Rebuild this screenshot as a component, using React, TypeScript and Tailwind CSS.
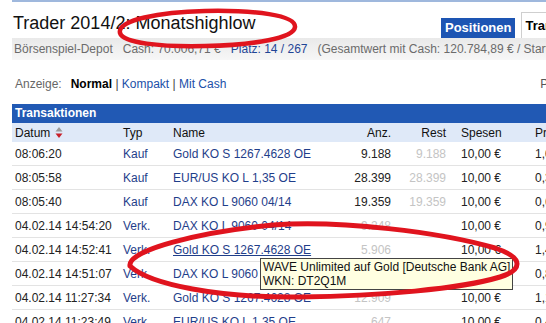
import React from 'react'

type Row = {
  datum: string
  typ: string
  name: string
  anz: string
  rest: string
  pr: string
  verk?: boolean
  hover?: boolean
}

const rows: Row[] = [
  { datum: '08:06:20', typ: 'Kauf', name: 'Gold KO S 1267.4628 OE', anz: '9.188', rest: '9.188', pr: '1,02 €' },
  { datum: '08:05:58', typ: 'Kauf', name: 'EUR/US KO L 1,35 OE', anz: '28.399', rest: '28.399', pr: '0,34 €' },
  { datum: '08:05:40', typ: 'Kauf', name: 'DAX KO L 9060 04/14', anz: '19.359', rest: '19.359', pr: '0,63 €' },
  { datum: '04.02.14 14:54:20', typ: 'Verk.', name: 'DAX KO L 9060 04/14', anz: '9.248', rest: '', pr: '0,94 €', verk: true },
  { datum: '04.02.14 14:52:41', typ: 'Verk.', name: 'Gold KO S 1267.4628 OE', anz: '5.906', rest: '', pr: '1,49 €', verk: true, hover: true },
  { datum: '04.02.14 14:51:07', typ: 'Verk.', name: 'DAX KO L 9060 04/14', anz: '7.215', rest: '', pr: '0,87 €', verk: true },
  { datum: '04.02.14 11:27:34', typ: 'Verk.', name: 'Gold KO S 1267.4628 OE', anz: '12.909', rest: '', pr: '1,14 €', verk: true },
  { datum: '04.02.14 11:23:49', typ: 'Verk.', name: 'EUR/US KO L 1,35 OE', anz: '647', rest: '', pr: '0,41 €', verk: true },
]

function SortIcon() {
  return (
    <svg width="8" height="13" viewBox="0 0 8 13" className="ml-[5px]">
      <path d="M4 1 L7.5 5.5 L0.5 5.5 Z" fill="#9a9a9a" />
      <path d="M0.5 7.5 L7.5 7.5 L4 12 Z" fill="#c8202a" />
    </svg>
  )
}

export default function App() {
  return (
    <div className="relative w-[546px] h-[323px] overflow-hidden bg-white font-['Liberation_Sans',Arial,sans-serif] text-[12px] text-[#222]">
      <div className="ml-[12px] w-[700px]">
        {/* top line */}
        <div className="h-[2px] bg-[#9fb8dd]" />

        {/* title + tabs */}
        <div className="flex items-end h-[36px]">
          <div className="w-[429px] pl-[1px] text-[18px] leading-[21px] text-[#111] pb-[4px]">
            Trader 2014/2: Monatshighlow
          </div>
          <div className="h-[20px] bg-[#1d55b3] text-white font-bold text-[13px] leading-[20px] px-[4px]">
            Positionen
          </div>
          <div className="ml-[6px] h-[26px] bg-white border border-b-0 border-[#cfcfcf] text-[13px] font-bold leading-[26px] pl-[3px] pr-[6px] text-black">
            Transaktionen
          </div>
        </div>

        {/* info strip */}
        <div className="h-[22px] flex items-center gap-[10px] pl-[2px] bg-gradient-to-b from-[#e9e9e9] to-[#f7f7f7] text-[#6b6b6b] whitespace-nowrap">
          <span>Börsenspiel-Depot</span>
          <span>Cash: 70.006,71 €</span>
          <span className="text-[#1f4596]">Platz: 14 / 267</span>
          <span>(Gesamtwert mit Cash: 120.784,89 € / Startkapital: 100.000,00 €)</span>
        </div>

        {/* Anzeige */}
        <div className="flex items-center mt-[17px] h-[14px] leading-[14px] pl-[3px] whitespace-nowrap">
          <span className="text-[#666]">Anzeige:</span>
          <span className="ml-[9px] font-bold text-black">Normal</span>
          <span className="text-[#444]">&nbsp;|&nbsp;</span>
          <span className="text-[#2050a8]">Kompakt</span>
          <span className="text-[#444]">&nbsp;|&nbsp;</span>
          <span className="text-[#2050a8]">Mit Cash</span>
          <span className="ml-[314px] text-[#555]">Portfolio</span>
        </div>

        {/* table */}
        <div className="mt-[13px]">
          <div className="h-[19px] bg-[#2159b4] text-white font-bold leading-[19px] pl-[3px]">
            Transaktionen
          </div>
          <div className="h-[19px] flex items-center bg-[#dfe9f8] text-[#111] whitespace-nowrap">
            <div className="w-[111px] pl-[3px] flex items-center">
              Datum
              <SortIcon />
            </div>
            <div className="w-[50px]">Typ</div>
            <div className="w-[150px]">Name</div>
            <div className="w-[68px] text-right">Anz.</div>
            <div className="w-[55px] text-right">Rest</div>
            <div className="w-[89px] pl-[15px]">Spesen</div>
            <div className="w-[80px]">Preis</div>
          </div>
          {rows.map((r, i) => (
            <div key={i} className="h-[24px] flex items-center border-b border-[#e3e3e3] whitespace-nowrap">
              <div className="w-[111px] pl-[3px]">{r.datum}</div>
              <div className="w-[50px] text-[#1f3e8a]">{r.typ}</div>
              <div className={`w-[150px] text-[#1f3e8a] ${r.hover ? 'underline' : ''}`}>{r.name}</div>
              <div className={`w-[68px] text-right ${r.verk ? 'text-[#c4c4c4]' : 'text-[#222]'}`}>{r.anz}</div>
              <div className="w-[55px] text-right text-[#c4c4c4]">{r.rest}</div>
              <div className="w-[89px] pl-[15px]">10,00 €</div>
              <div className="w-[80px]">{r.pr}</div>
            </div>
          ))}
        </div>
      </div>

      {/* tooltip */}
      <div className="absolute left-[260px] top-[258px] w-[253px] h-[32px] border border-[#444] bg-[#ffffe1] text-[#111] leading-[14px] px-[2px] pt-[1px] whitespace-nowrap">
        <div>WAVE Unlimited auf Gold [Deutsche Bank AG]</div>
        <div>WKN: DT2Q1M</div>
      </div>

      {/* red annotation ellipses */}
      <svg className="absolute inset-0 pointer-events-none" width="546" height="323" viewBox="0 0 546 323">
        <path
          d="M120 33 C117 20 160 12 205 11 C255 10 296 15 295 27 C294 38 255 45 205 46 C160 47 123 43 120 33 Z"
          fill="none"
          stroke="#e0141e"
          strokeWidth="4.5"
        />
        <path
          d="M130 266 C127 250 200 232 273 225 C340 220 440 232 495 248 C525 258 522 270 500 277 C460 289 380 296 300 297 C220 298 150 285 130 266 Z"
          fill="none"
          stroke="#e0141e"
          strokeWidth="5"
        />
      </svg>
    </div>
  )
}
